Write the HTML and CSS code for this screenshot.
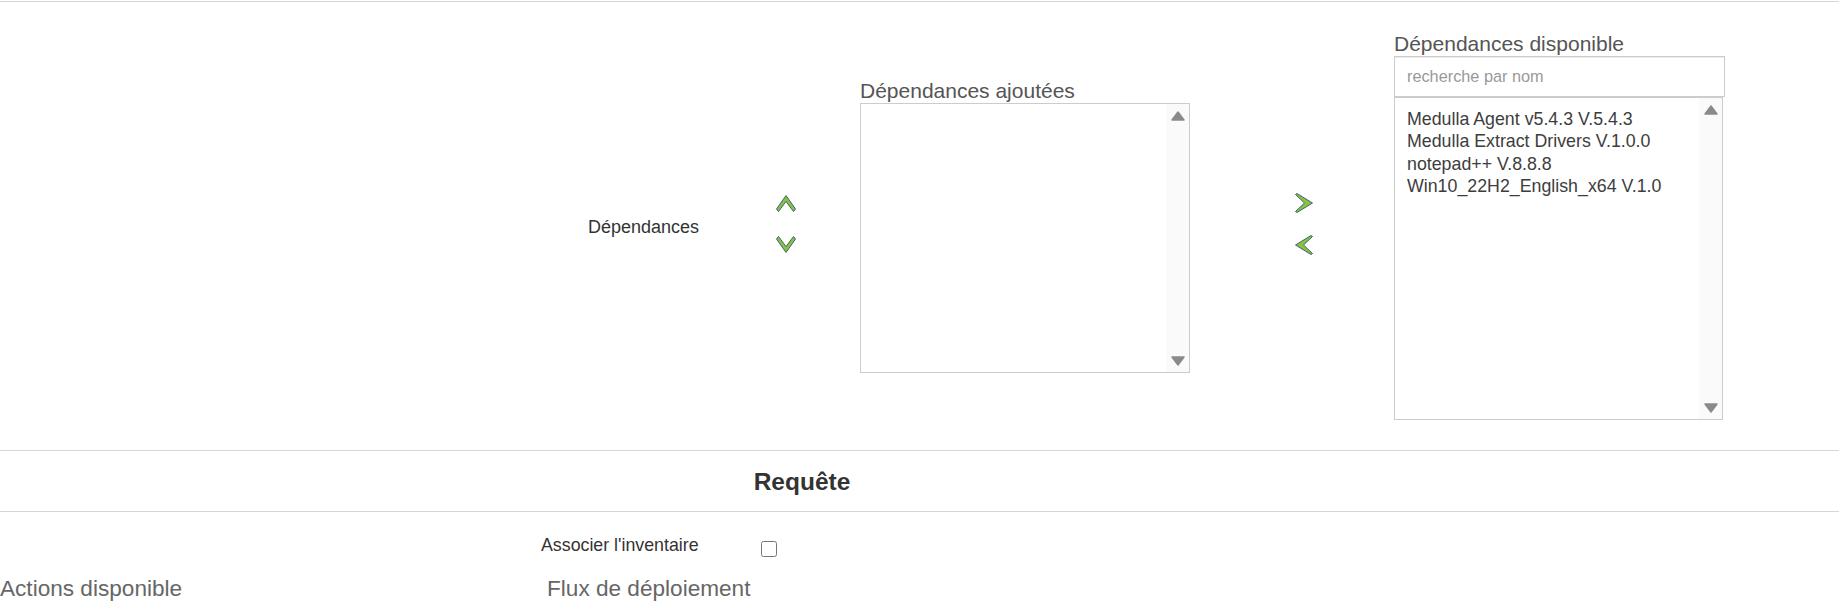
FILE: index.html
```html
<!DOCTYPE html>
<html lang="fr">
<head>
    <meta charset="UTF-8">
    <meta name="viewport" content="width=device-width, initial-scale=1.0">
    <title>Package</title>
    <link rel="stylesheet" href="styles.css">
</head>
<body>
    <div class="deps">
        <div class="dep-label">Dépendances</div>

        <div class="order-arrows">
            <svg width="20" height="17" viewBox="0 0 20 17"><polygon class="chev" points="10,0.5 19.5,14 17.5,16.5 10,6.5 2.5,16.5 0.5,14"/></svg>
            <svg width="20" height="17" viewBox="0 0 20 17"><polygon class="chev" points="10,16.5 19.5,3 17.5,0.5 10,10.5 2.5,0.5 0.5,3"/></svg>
        </div>

        <div class="added">
            <h3 class="col-title">Dépendances ajoutées</h3>
            <div class="listbox listbox-added">
                <ul class="list-items"></ul>
                <div class="scroll">
                    <svg width="14" height="10" viewBox="0 0 14 10"><polygon class="tri" points="7,1 13,9 1,9"/></svg>
                    <svg width="14" height="10" viewBox="0 0 14 10"><polygon class="tri" points="1,1 13,1 7,9"/></svg>
                </div>
            </div>
        </div>

        <div class="move-arrows">
            <svg width="18" height="20" viewBox="0 0 18 20"><polygon class="chev" points="0.5,1.5 2,0.5 17.5,10 2,19.5 0.5,18.5 9.5,10"/></svg>
            <svg width="18" height="20" viewBox="0 0 18 20"><polygon class="chev" points="17.5,1.5 16,0.5 0.5,10 16,19.5 17.5,18.5 8.5,10"/></svg>
        </div>

        <div class="available">
            <h3 class="col-title">Dépendances disponible</h3>
            <input type="text" class="search" placeholder="recherche par nom">
            <div class="listbox listbox-available">
                <ul class="list-items">
                    <li>Medulla Agent v5.4.3 V.5.4.3</li>
                    <li>Medulla Extract Drivers V.1.0.0</li>
                    <li>notepad++ V.8.8.8</li>
                    <li>Win10_22H2_English_x64 V.1.0</li>
                </ul>
                <div class="scroll">
                    <svg width="14" height="10" viewBox="0 0 14 10"><polygon class="tri" points="7,1 13,9 1,9"/></svg>
                    <svg width="14" height="10" viewBox="0 0 14 10"><polygon class="tri" points="1,1 13,1 7,9"/></svg>
                </div>
            </div>
        </div>
    </div>

    <h2 class="section-title">Requête</h2>

    <div class="inventory-row">
        <label for="assoc-inv">Associer l'inventaire</label>
        <input type="checkbox" id="assoc-inv">
    </div>

    <div class="flow-titles">
        <h3 class="actions-title">Actions disponible</h3>
        <h3>Flux de déploiement</h3>
    </div>
</body>
</html>
```

FILE: styles.css
```css
body {
    margin: 0;
    font-family: "Liberation Sans", Arial, sans-serif;
    color: #333;
    background-color: #fff;
    overflow: hidden;
}
.deps {
    display: flex;
    align-items: flex-start;
    margin-top: 1px;
    border-top: 1px solid #d6d6d6;
    height: 448px;
}
.dep-label {
    margin: 215px 0 0 588px;
    width: 188px;
    font-size: 18px;
    line-height: 20px;
    color: #333;
}
.order-arrows {
    display: flex;
    flex-direction: column;
    gap: 24px;
    width: 20px;
    margin-top: 193px;
}
.chev {
    fill: #8dc13d;
    stroke: #3a6878;
    stroke-width: 1;
    stroke-linejoin: round;
}
.tri {
    fill: #8a8a8a;
    stroke: #8a8a8a;
    stroke-width: 1.5;
    stroke-linejoin: round;
}
.added {
    width: 330px;
    margin: 78px 0 0 64px;
}
.col-title {
    margin: 0 0 1px;
    font-size: 21px;
    line-height: 22px;
    font-weight: normal;
    color: #555;
}
.listbox {
    display: flex;
    box-sizing: border-box;
    border: 1px solid #ccc;
    background-color: #fff;
}
.listbox-added {
    height: 270px;
}
.list-items {
    flex: 1;
    margin: 0;
    padding: 10px 12px;
    list-style: none;
    font-size: 17.8px;
    line-height: 22.3px;
    color: #3d3d3d;
    white-space: nowrap;
}
.scroll {
    display: flex;
    flex-direction: column;
    justify-content: space-between;
    align-items: center;
    width: 23px;
    padding: 7px 0 6px;
    box-sizing: border-box;
    background-color: #fafafa;
}
.move-arrows {
    display: flex;
    flex-direction: column;
    gap: 22px;
    width: 18px;
    margin: 191px 0 0 105px;
}
.available {
    width: 331px;
    margin: 31px 0 0 81px;
}
.available .col-title {
    margin-bottom: 1px;
}
.search {
    display: block;
    width: 331px;
    height: 41px;
    margin: 0;
    padding: 0 12px;
    box-sizing: border-box;
    border: 1px solid #ccc;
    box-shadow: inset 0 1px 1px rgba(0,0,0,0.075);
    font-family: "Liberation Sans", Arial, sans-serif;
    font-size: 16.3px;
    color: #555;
    outline: none;
}
.search::placeholder {
    color: #999;
}
.listbox-available {
    width: 329px;
    height: 323px;
}
.section-title {
    margin: 0;
    padding: 16px 235px 14px 0;
    border-top: 1px solid #d6d6d6;
    border-bottom: 1px solid #d6d6d6;
    text-align: center;
    font-size: 24.5px;
    line-height: 30px;
    font-weight: bold;
    color: #333;
}
.inventory-row {
    display: flex;
    align-items: flex-start;
    margin-top: 23px;
    padding-left: 541px;
}
.inventory-row label {
    width: 220px;
    font-size: 17.8px;
    line-height: 20px;
    color: #333;
}
.inventory-row input {
    width: 16px;
    height: 16px;
    margin: 6px 0 0;
}
.flow-titles {
    display: flex;
    margin-top: 19px;
}
.flow-titles h3 {
    margin: 0;
    font-size: 22.6px;
    line-height: 26px;
    font-weight: normal;
    color: #666;
}
.flow-titles .actions-title {
    width: 547px;
}
```
